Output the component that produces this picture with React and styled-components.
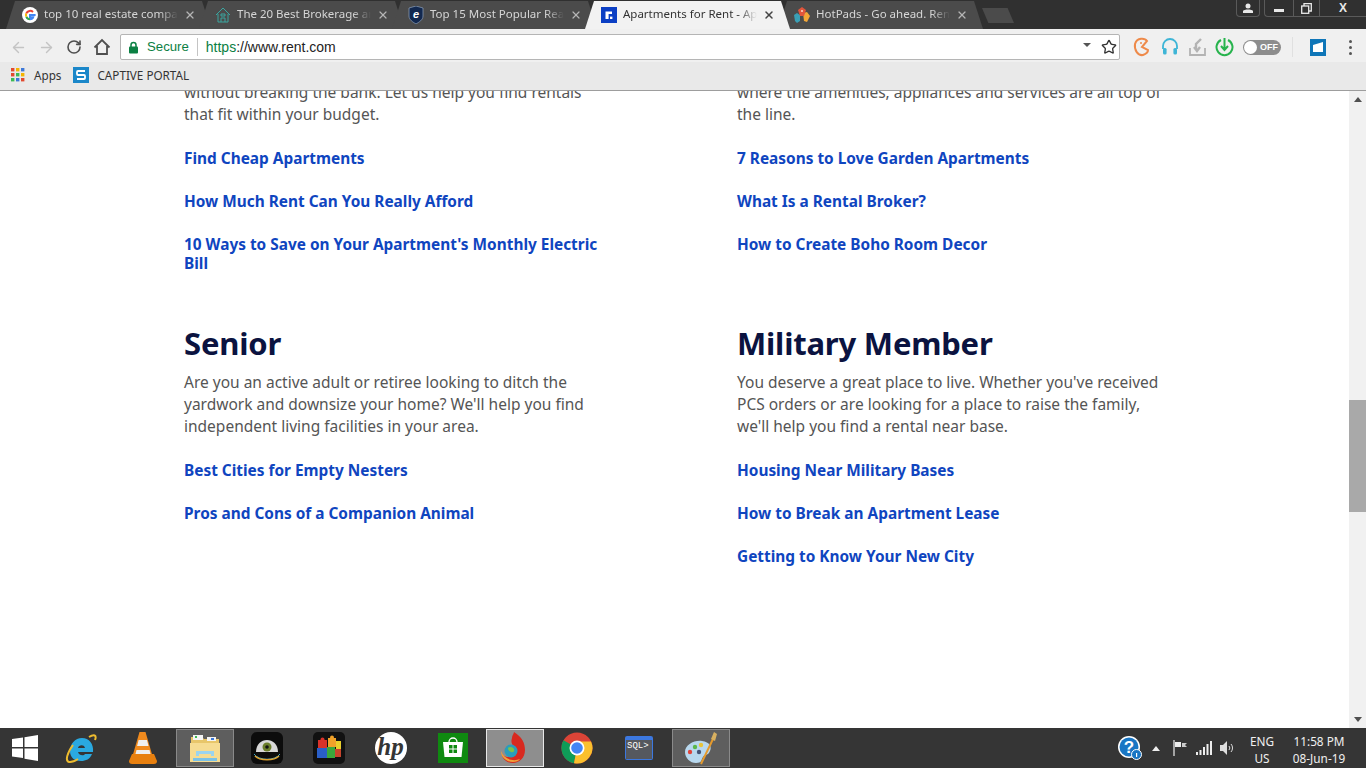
import React from 'react';
import styled, { createGlobalStyle } from 'styled-components';
import { ArrowLeft, ArrowRight, RotateCw, Star, X } from 'lucide-react';

const Global = createGlobalStyle`
  html, body { margin: 0; padding: 0; height: 100%; overflow: hidden; background: #fff; }
  #root { height: 100%; }
`;

const Screen = styled.div`
  width: 1366px;
  height: 768px;
  display: flex;
  flex-direction: column;
  overflow: hidden;
  font-family: "Noto Sans", sans-serif;
`;

/* browser chrome */
const TabStrip = styled.div`
  height: 29px;
  flex: none;
  display: flex;
  align-items: flex-end;
  background: #303030;
  padding-left: 6px;
`;

const Tab = styled.div`
  position: relative;
  z-index: ${p => (p.$active ? 2 : 1)};
  width: 205px;
  height: 28px;
  margin-right: -12px;
  flex: none;
  display: flex;
  align-items: center;
  padding: 0 15px 0 16px;
  box-sizing: border-box;
  gap: 6px;
  background: ${p => (p.$active ? '#f2f2f2' : '#4b4b4b')};
  color: ${p => (p.$active ? '#333' : '#d6d6d6')};
  clip-path: polygon(0 100%, 9px 0, calc(100% - 9px) 0, 100% 100%);
`;

const TabTitle = styled.span`
  flex: 1;
  min-width: 0;
  margin-bottom: 2px;
  white-space: nowrap;
  font: 11.5px/16px "Noto Sans", sans-serif;
  -webkit-mask-image: linear-gradient(to right, #000 86%, transparent 100%);
  mask-image: linear-gradient(to right, #000 86%, transparent 100%);
`;

const NewTab = styled.div`
  width: 32px;
  height: 15px;
  margin: 0 0 6px 11px;
  background: #4b4b4b;
  clip-path: polygon(0 0, 80% 0, 100% 100%, 20% 100%);
`;

const WindowControls = styled.div`
  margin-left: auto;
  align-self: flex-start;
  display: flex;
  gap: 4px;
  color: #e8e8e8;
`;

const WinBtn = styled.div`
  width: ${p => p.$w}px;
  height: 17px;
  display: flex;
  align-items: center;
  justify-content: center;
  box-sizing: border-box;
  border: 1px solid #5a5a5a;
  border-top: 0;
  border-radius: 0 0 4px 4px;
`;

const WinGroup = styled.div`
  display: flex;
  border: 1px solid #5a5a5a;
  border-top: 0;
  border-right: 0;
  border-radius: 0 0 0 4px;
  height: 17px;
  box-sizing: border-box;
`;

const WinCell = styled.div`
  width: ${p => p.$w}px;
  display: flex;
  align-items: center;
  justify-content: center;
  border-right: 1px solid #5a5a5a;
  font: bold 12px "Liberation Sans", sans-serif;
  &:last-child { border-right: 0; }
`;

const MinGlyph = styled.i`
  display: block;
  width: 10px;
  height: 3px;
  margin-top: 5px;
  background: #e8e8e8;
`;

const Toolbar = styled.div`
  height: 33px;
  flex: none;
  box-sizing: border-box;
  padding: 3px 0 0 4px;
  display: flex;
  align-items: center;
  background: #f0f0f0;
`;

const NavBtn = styled.div`
  width: 28px;
  height: 28px;
  display: flex;
  align-items: center;
  justify-content: center;
  color: ${p => (p.$off ? '#c4c4c4' : '#4f4f4f')};
`;

const Omnibox = styled.div`
  width: 1000px;
  height: 26px;
  margin-left: 4px;
  box-sizing: border-box;
  border: 1px solid #b5b5b5;
  border-radius: 2px;
  background: #fff;
  display: flex;
  align-items: center;
  padding: 0 2px 0 7px;
  font: 14px "Liberation Sans", sans-serif;
`;

const Secure = styled.span`
  color: #0b8043;
  margin-left: 8px;
  font-size: 13.2px;
  padding-right: 8px;
  border-right: 1px solid #c4c4c4;
  line-height: 18px;
`;

const Url = styled.span`
  margin-left: 8px;
  color: #222;
  font-size: 14px;
  b { color: #0b8043; font-weight: 400; }
`;

const OmniEnd = styled.div`
  margin-left: auto;
  display: flex;
  align-items: center;
  gap: 10px;
  color: #333;
`;

const DropCaret = styled.i`
  display: block;
  margin-bottom: 4px;
  border-left: 4px solid transparent;
  border-right: 4px solid transparent;
  border-top: 4px solid #555;
`;

const Extensions = styled.div`
  display: flex;
  align-items: center;
  margin-left: 8px;
  flex: 1;
`;

const ExtSlot = styled.div`
  width: ${p => p.$w || 28}px;
  display: flex;
  justify-content: center;
  align-items: center;
`;

const ToggleOff = styled.div`
  width: 38px;
  height: 15px;
  margin-left: 7px;
  flex: none;
  border-radius: 8px;
  background: #8d8d8d;
  display: flex;
  align-items: center;
  justify-content: flex-end;
  padding-right: 3px;
  box-sizing: border-box;
  position: relative;
  color: #fff;
  font: bold 9px "Liberation Sans", sans-serif;
  &::before {
    content: '';
    position: absolute;
    left: 1px;
    top: 1px;
    width: 13px;
    height: 13px;
    border-radius: 50%;
    background: #fff;
  }
`;

const ExtDivider = styled.div`
  width: 1px;
  height: 20px;
  background: #e0e0e0;
  margin: 0 17px 0 11px;
`;

const Dots = styled.div`
  display: flex;
  flex-direction: column;
  gap: 3px;
  margin-left: 23px;
  i {
    width: 3px;
    height: 3px;
    border-radius: 50%;
    background: #555;
    display: block;
  }
`;

const BookmarkBar = styled.div`
  height: 29px;
  flex: none;
  display: flex;
  align-items: center;
  background: #e9e9e9;
  border-bottom: 1px solid #9d9d9d;
  box-sizing: border-box;
  padding: 0 0 2px 11px;
  font: 11.7px "Noto Sans", sans-serif;
  color: #333;
`;

const BookmarkLabel = styled.span`
  margin-left: ${p => p.$gap}px;
  display: flex;
`;

/* web page */
const Viewport = styled.div`
  flex: 1;
  min-height: 0;
  display: flex;
  overflow: hidden;
  background: #fff;
`;

const Page = styled.div`
  flex: 1;
  min-width: 0;
  padding-left: 184px;
  overflow: hidden;
`;

const Sections = styled.div`
  display: grid;
  grid-template-columns: 553px 553px;
  margin-top: -10px;
  row-gap: 47px;
`;

const Section = styled.section`
  width: 425px;
`;

const Heading = styled.h2`
  margin: 0 0 5px;
  font: 700 31px/46px "Noto Sans", sans-serif;
  letter-spacing: -0.2px;
  color: #0b1340;
`;

const Blurb = styled.p`
  margin: 0 0 24px;
  font: 400 15.5px/22px "Noto Sans", sans-serif;
  color: #555;
  white-space: pre-line;
`;

const LinkList = styled.div`
  display: flex;
  flex-direction: column;
  gap: 24px;
`;

const PageLink = styled.a`
  font: 700 15.4px/19px "Noto Sans", sans-serif;
  color: #0f45bf;
  text-decoration: none;
`;

const Scrollbar = styled.div`
  width: 17px;
  flex: none;
  display: flex;
  flex-direction: column;
  background: #f1f1f1;
`;

const ScrollArrow = styled.div`
  height: 17px;
  flex: none;
  display: flex;
  align-items: center;
  justify-content: center;
  &::before {
    content: '';
    border-left: 4px solid transparent;
    border-right: 4px solid transparent;
    ${p => (p.$down ? 'border-top: 5px solid #505050;' : 'border-bottom: 5px solid #505050;')}
  }
`;

const ScrollTrack = styled.div`
  flex: 1;
  padding-top: 292px;
`;

const ScrollThumb = styled.div`
  height: 112px;
  background: #a9a9a9;
`;

/* windows taskbar */
const Taskbar = styled.div`
  height: 40px;
  flex: none;
  display: flex;
  align-items: center;
  background: #353535;
  color: #f0f0f0;
`;

const StartBtn = styled.div`
  width: 50px;
  height: 40px;
  margin-right: 2px;
  display: flex;
  align-items: center;
  justify-content: center;
`;

const TaskGroup = styled.div`
  display: flex;
  gap: 4px;
`;

const TaskBtn = styled.div`
  width: 58px;
  height: 38px;
  box-sizing: border-box;
  display: flex;
  align-items: center;
  justify-content: center;
  background: ${p => (p.$focus ? '#8e8e8e' : p.$open ? '#5e5e5e' : 'transparent')};
  border: 1px solid ${p => (p.$focus ? '#e8e8e8' : p.$open ? '#8a8a8a' : 'transparent')};
`;

const Tray = styled.div`
  margin-left: auto;
  display: flex;
  align-items: center;
  height: 40px;
  padding-right: 6px;
`;

const TrayIcon = styled.div`
  width: ${p => p.$w}px;
  display: flex;
  justify-content: center;
`;

const TrayText = styled.div`
  width: ${p => p.$w}px;
  margin-left: ${p => p.$gap || 0}px;
  padding-top: 3px;
  text-align: center;
  font: 11.8px/17px "Noto Sans", sans-serif;
  color: #f0f0f0;
`;

const Sec = ({ title, text, links }) => (
  <Section>
    {title && <Heading>{title}</Heading>}
    <Blurb>{text}</Blurb>
    <LinkList>
      {links.map(l => <PageLink href="#" key={l}>{l}</PageLink>)}
    </LinkList>
  </Section>
);

const GoogleIcon = () => (
  <svg width="16" height="16" viewBox="0 0 16 16">
    <circle cx="8" cy="8" r="8" fill="#fff" />
    <path d="M13.6 8.1H8v2.2h3.2c-.4 1.2-1.6 2-3.2 2" fill="none" stroke="#4285f4" strokeWidth="2" />
    <path d="M4.3 9.6A4.2 4.2 0 0 0 8 12.3" fill="none" stroke="#34a853" strokeWidth="2" />
    <path d="M4.3 6.4a4.2 4.2 0 0 0 0 3.2" fill="none" stroke="#fbbc05" strokeWidth="2" />
    <path d="M11 5A4.2 4.2 0 0 0 4.3 6.4" fill="none" stroke="#ea4335" strokeWidth="2" />
  </svg>
);

const HouseIcon = () => (
  <svg width="16" height="16" viewBox="0 0 16 16" fill="none" stroke="#3aa6a0" strokeWidth="1">
    <path d="M1 8l7-7 7 7M3 7v8h10V7" />
    <path d="M6 15v-4h4v4M6 7h4v2H6z" />
  </svg>
);

const ShieldIcon = () => (
  <svg width="16" height="18" viewBox="0 0 16 18">
    <path d="M1 2l7-2 7 2v8c0 4-4 6-7 8-3-2-7-4-7-8z" fill="#12284f" stroke="#8fa3bf" strokeWidth=".7" />
    <text x="8" y="12" textAnchor="middle" fill="#fff" fontSize="11" fontStyle="italic" fontWeight="700" fontFamily="Liberation Sans">e</text>
  </svg>
);

const RentIcon = () => (
  <svg width="16" height="16" viewBox="0 0 16 16">
    <rect width="16" height="16" fill="#0b3fc4" />
    <path d="M4.5 12V4.5h6.5v2.6H7.6V12z" fill="#fff" />
    <rect x="9" y="9.6" width="2.4" height="2.4" fill="#fff" />
  </svg>
);

const HotpadsIcon = () => (
  <svg width="16" height="16" viewBox="0 0 16 16">
    <path d="M0 8l3-2 3 2v6l-3 2-2-2z" fill="#3a9fb5" />
    <path d="M9 6l4-1 3 4-3 6-3-1z" fill="#f3a738" />
    <path d="M4 3l4-3 4 3-2 6H6z" fill="#e0553c" />
    <circle cx="8" cy="4" r="1" fill="#fbd9c9" />
  </svg>
);

const TabClose = ({ dark }) => (
  <X size={12} strokeWidth={dark ? 3 : 2.4} color={dark ? '#444' : '#b5b5b5'} style={{ flex: 'none' }} />
);

const HomeIcon = () => (
  <svg width="18" height="18" viewBox="0 0 18 18" fill="none" stroke="#4f4f4f" strokeWidth="1.8">
    <path d="M1.5 9.5L9 2l7.5 7.5M4 8v8h10V8" />
  </svg>
);

const LockIcon = () => (
  <svg width="11" height="13" viewBox="0 0 11 13">
    <path d="M3 6V4a2.5 2.5 0 0 1 5 0v2" fill="none" stroke="#0b8043" strokeWidth="1.5" />
    <rect x="1" y="5.5" width="9" height="7" rx="1" fill="#0b8043" />
  </svg>
);

const PacIcon = () => (
  <svg width="18" height="20" viewBox="0 0 18 20" fill="none" stroke="#ee8a4a" strokeWidth="2">
    <path d="M14 4C12 1 4 0 2 7c-1 6 3 12 8 11 3-1 5-3 5-5l-6-3z" />
    <circle cx="8" cy="6" r="1" fill="#ee8a4a" stroke="none" />
  </svg>
);

const PhonesIcon = () => (
  <svg width="18" height="18" viewBox="0 0 18 18" fill="none">
    <path d="M2 11V8a7 7 0 0 1 14 0v3" stroke="#3eb5d6" strokeWidth="1.8" />
    <rect x="2" y="10" width="3.6" height="6.5" rx="1.5" fill="#3eb5d6" />
    <rect x="12.4" y="10" width="3.6" height="6.5" rx="1.5" fill="#3eb5d6" />
  </svg>
);

const SaveIcon = () => (
  <svg width="18" height="20" viewBox="0 0 18 20" fill="none" stroke="#b3b3b3" strokeWidth="1.8">
    <path d="M1 11v7h15v-7" />
    <path d="M12 2L7 7v6M5 10l3 4 3-4" strokeWidth="2.4" />
  </svg>
);

const GreenIcon = () => (
  <svg width="19" height="20" viewBox="0 0 19 20" fill="none" stroke="#27b34d" strokeWidth="2">
    <path d="M6 3a8 8 0 1 0 7 0" />
    <path d="M9.5 1v11M6 9l3.5 4L13 9" />
  </svg>
);

const BlueExtIcon = () => (
  <svg width="16" height="17" viewBox="0 0 16 17">
    <rect width="16" height="17" fill="#0f76b8" />
    <path d="M3 6l10-3v10H3z" fill="#fff" />
  </svg>
);

const AppsGrid = () => {
  const colors = ['#e2492f', '#f4b400', '#3c78d8', '#e2492f', '#3cba54', '#f4b400', '#3cba54', '#3c78d8', '#e2492f'];
  return (
    <svg width="14" height="14" viewBox="0 0 14 14">
      {colors.map((c, i) => (
        <rect key={i} x={(i % 3) * 5} y={Math.floor(i / 3) * 5} width="3.4" height="3.4" fill={c} />
      ))}
    </svg>
  );
};

const PortalIcon = () => (
  <svg width="16" height="16" viewBox="0 0 16 16">
    <rect width="16" height="16" fill="#1b87c9" />
    <path d="M12 4H5a1 1 0 0 0-1 1v2a1 1 0 0 0 1 1h6a1 1 0 0 1 1 1v2a1 1 0 0 1-1 1H4" fill="none" stroke="#fff" strokeWidth="1.8" />
  </svg>
);

const WinLogo = () => (
  <svg width="26" height="26" viewBox="0 0 26 26" fill="#fff">
    <path d="M0 4l11-1.5V12H0zM12.500 2.300L26 0v12H12.500zM0 13.500h11V23L0 21.500zM12.500 13.500H26V26l-13.500-2.200z" />
  </svg>
);

const IEIcon = () => (
  <svg width="32" height="32" viewBox="0 0 32 32" fill="none">
    <path d="M17 6C10 6 5 12 5 19s5 10 11 10c5 0 9-2 11-7h-7c-1 2-6 2-7-2h15c1-8-4-14-11-14zm-4 10c.5-3 6-4 7 0z" fill="#2aa9e0" fillRule="evenodd" />
    <path d="M24 5c5-3 8-2 6 3M8 13C2 21 0 29 4 30c3 .5 6-1 9-3" stroke="#eebc2f" strokeWidth="2" />
  </svg>
);

const VlcIcon = () => (
  <svg width="28" height="32" viewBox="0 0 28 32">
    <path d="M10.500 0h6l7 24h-20z" fill="#f08a1d" />
    <path d="M9.600 8h8.400l1.500 6h-11.400zM7.500 18h13l1 4h-15z" fill="#efefef" />
    <path d="M3 22h22l3 7c0 2-1 3-3 3H3c-2 0-3-1-3-3z" fill="#e8800f" />
  </svg>
);

const FolderIcon = () => (
  <svg width="32" height="32" viewBox="0 0 32 32">
    <path d="M2 5h11l2 2h15v6H2z" fill="#e8c66a" />
    <rect x="4" y="3" width="10" height="5" fill="#f4f4f4" />
    <rect x="6" y="4" width="2" height="2" fill="#3cba54" />
    <rect x="18" y="5" width="9" height="4" fill="#f4f4f4" />
    <rect x="22" y="6" width="3" height="2" fill="#3c78d8" />
    <path d="M1 11h30v19H1z" fill="#f6dc92" />
    <path d="M7 24v-5h18v5h-3v-2H10v2z" fill="#9bd4ef" />
    <rect x="4" y="26" width="24" height="3" fill="#7cc2e6" />
  </svg>
);

const CamIcon = () => (
  <svg width="32" height="32" viewBox="0 0 32 32">
    <rect width="32" height="32" rx="6" fill="#0c0c0c" />
    <path d="M5 20c0-16 22-16 22 0z" fill="#d8d8d8" />
    <circle cx="16" cy="15" r="4.500" fill="#6a7d2a" />
    <circle cx="16" cy="15" r="1.800" fill="#111" />
    <path d="M3 22c5 7 21 7 26 0" fill="none" stroke="#3aa7c8" strokeWidth="1" />
    <path d="M4 24c5 5 19 5 24 0" fill="none" stroke="#e0a32e" strokeWidth="1.500" />
  </svg>
);

const PuzzleIcon = () => (
  <svg width="32" height="32" viewBox="0 0 32 32">
    <rect width="32" height="32" rx="5" fill="#111" />
    <rect x="5" y="8" width="9" height="8" fill="#d8322a" />
    <circle cx="9.500" cy="7.500" r="2" fill="#d8322a" />
    <rect x="15" y="6" width="8" height="9" fill="#f0a22a" />
    <circle cx="19" cy="5.500" r="2" fill="#f0a22a" />
    <rect x="23" y="9" width="5" height="8" fill="#e9d02c" />
    <rect x="4" y="16" width="10" height="10" fill="#2a5fc8" />
    <rect x="14" y="15" width="8" height="11" fill="#3aa83c" />
    <rect x="22" y="17" width="6" height="8" fill="#c8442c" />
  </svg>
);

const HpIcon = () => (
  <svg width="32" height="32" viewBox="0 0 32 32">
    <circle cx="16" cy="16" r="16" fill="#fff" />
    <text x="15.500" y="23" textAnchor="middle" fontFamily="Liberation Serif" fontStyle="italic" fontWeight="700" fontSize="25" fill="#353535">hp</text>
  </svg>
);

const StoreIcon = () => (
  <svg width="30" height="30" viewBox="0 0 30 30">
    <rect width="30" height="30" fill="#0f8a10" />
    <path d="M11 9a4 4 0 0 1 8 0" fill="none" stroke="#fff" strokeWidth="1.300" />
    <path d="M5 9h20l-1.500 15h-17z" fill="#fff" />
    <path d="M11 12h3.500v3.500H11zM15.500 12H19v3.500h-3.500zM11 16.500h3.500V20H11zM15.500 16.500H19V20h-3.500z" fill="#0f8a10" />
  </svg>
);

const FlameIcon = () => (
  <svg width="30" height="32" viewBox="0 0 30 32">
    <path d="M14 0c8 5 11 11 11 18 0 8-6 13-12 13S2 27 2 22c3 5 12 4 12-4 0-5-4-6-2-12 0-3 2-4 2-6z" fill="#d8291f" />
    <path d="M1 19c0 7 6 11 12 11 3 0 6-1 7-3-7 3-16 0-19-8z" fill="#f1a23a" />
    <circle cx="11" cy="19" r="6.500" fill="#2a9dbb" />
    <path d="M8 16c2-2 5-1 6 1s-1 4-3 3-3-2-3-4z" fill="#7cc04a" />
  </svg>
);

const ChromeIcon = () => (
  <svg width="32" height="32" viewBox="0 0 32 32">
    <circle cx="16" cy="16" r="15.500" fill="#db4437" />
    <path d="M16 16L2.500 8.200A15.500 15.500 0 0 0 13 31.200z" fill="#0f9d58" />
    <path d="M16 16l-3 15.200A15.500 15.500 0 0 0 30 9.500H16z" fill="#fbc02d" />
    <circle cx="16" cy="16" r="7.500" fill="#fff" />
    <circle cx="16" cy="16" r="5.800" fill="#4285f4" />
  </svg>
);

const SqlIcon = () => (
  <svg width="28" height="24" viewBox="0 0 28 24">
    <rect x=".5" y=".5" width="27" height="23" rx="1" fill="#55585e" stroke="#3c78e0" />
    <rect x="1" y="1" width="26" height="3" fill="#3c78e0" />
    <text x="2" y="11.500" fontFamily="Liberation Mono" fontSize="9" fill="#fff">SQL&gt;</text>
  </svg>
);

const PaletteIcon = () => (
  <svg width="34" height="34" viewBox="0 0 34 34">
    <path d="M1 21c0-7 9-12 17-11 8 1 10 6 8 10-2 5-5 3-7 6s-1 6-7 6C6 32 1 27 1 21z" fill="#b8d8ee" />
    <circle cx="6" cy="21" r="2.200" fill="#e0433a" />
    <circle cx="11" cy="16" r="2.200" fill="#5ab84a" />
    <circle cx="17" cy="14" r="2.200" fill="#e8c43a" />
    <circle cx="15" cy="21" r="2.200" fill="#445577" />
    <path d="M17 33L29 8" stroke="#e59a2c" strokeWidth="2" />
    <path d="M27 8l3-7 3 2-2 7z" fill="#d8b060" />
  </svg>
);

const HelpIcon = () => (
  <svg width="26" height="26" viewBox="0 0 26 26">
    <circle cx="12" cy="12" r="11" fill="#fff" />
    <circle cx="12" cy="12" r="9.500" fill="#1976c4" />
    <text x="12" y="18" textAnchor="middle" fontFamily="Liberation Sans" fontWeight="700" fontSize="17" fill="#fff">?</text>
    <circle cx="19.500" cy="19.500" r="5" fill="#1976c4" stroke="#fff" />
    <rect x="19" y="18" width="1.200" height="4" fill="#fff" />
  </svg>
);

const Caret = () => (
  <svg width="8" height="5" viewBox="0 0 8 5"><path d="M0 5l4-5 4 5z" fill="#eee" /></svg>
);

const FlagIcon = () => (
  <svg width="14" height="16" viewBox="0 0 14 16">
    <path d="M1 0v16" stroke="#eee" strokeWidth="1.200" />
    <path d="M2 2h6v5H2z" fill="#eee" />
    <path d="M9 3h5l-2 2 2 2H9z" fill="#ccc" />
  </svg>
);

const SignalIcon = () => (
  <svg width="16" height="14" viewBox="0 0 16 14" fill="#eee">
    <rect x="0" y="11" width="2" height="3" />
    <rect x="3.500" y="9" width="2" height="5" />
    <rect x="7" y="6" width="2" height="8" />
    <rect x="10.500" y="3" width="2" height="11" />
    <rect x="14" y="0" width="2" height="14" />
  </svg>
);

const SpeakerIcon = () => (
  <svg width="16" height="14" viewBox="0 0 16 14" fill="none" stroke="#ddd">
    <path d="M0 4h3l4-4v14l-4-4H0z" fill="#ddd" stroke="none" />
    <path d="M9 5a3 3 0 0 1 0 4M11 3a6 6 0 0 1 0 8" />
  </svg>
);

const RestoreIcon = () => (
  <svg width="11" height="11" viewBox="0 0 11 11" fill="none" stroke="#e8e8e8" strokeWidth="1.300">
    <path d="M3 3V.7h7.300V8H8" />
    <rect x=".7" y="3" width="7" height="7.300" />
  </svg>
);

const AccountIcon = () => (
  <svg width="10" height="10" viewBox="0 0 10 10" fill="#e8e8e8">
    <circle cx="5" cy="3" r="2.500" />
    <path d="M0 10V8c1-2 9-2 10 0v2z" />
  </svg>
);

export default function App() {
  return (
    <Screen>
      <Global />
      <TabStrip>
        <Tab><GoogleIcon /><TabTitle>top 10 real estate compa</TabTitle><TabClose /></Tab>
        <Tab><HouseIcon /><TabTitle>The 20 Best Brokerage ar</TabTitle><TabClose /></Tab>
        <Tab><ShieldIcon /><TabTitle>Top 15 Most Popular Rea</TabTitle><TabClose /></Tab>
        <Tab $active><RentIcon /><TabTitle>Apartments for Rent - Ap</TabTitle><TabClose dark /></Tab>
        <Tab><HotpadsIcon /><TabTitle>HotPads - Go ahead. Ren</TabTitle><TabClose /></Tab>
        <NewTab />
        <WindowControls>
          <WinBtn $w={24}><AccountIcon /></WinBtn>
          <WinGroup>
            <WinCell $w={28}><MinGlyph /></WinCell>
            <WinCell $w={25}><RestoreIcon /></WinCell>
            <WinCell $w={46}>X</WinCell>
          </WinGroup>
        </WindowControls>
      </TabStrip>

      <Toolbar>
        <NavBtn $off><ArrowLeft size={17} strokeWidth={2} /></NavBtn>
        <NavBtn $off><ArrowRight size={17} strokeWidth={2} /></NavBtn>
        <NavBtn><RotateCw size={16} strokeWidth={2.4} /></NavBtn>
        <NavBtn><HomeIcon /></NavBtn>
        <Omnibox>
          <LockIcon />
          <Secure>Secure</Secure>
          <Url><b>https</b>://www.rent.com</Url>
          <OmniEnd>
            <DropCaret />
            <Star size={16} strokeWidth={2} />
          </OmniEnd>
        </Omnibox>
        <Extensions>
          <ExtSlot><PacIcon /></ExtSlot>
          <ExtSlot><PhonesIcon /></ExtSlot>
          <ExtSlot><SaveIcon /></ExtSlot>
          <ExtSlot $w={24}><GreenIcon /></ExtSlot>
          <ToggleOff>OFF</ToggleOff>
          <ExtDivider />
          <ExtSlot $w={16}><BlueExtIcon /></ExtSlot>
          <Dots><i /><i /><i /></Dots>
        </Extensions>
      </Toolbar>

      <BookmarkBar>
        <AppsGrid />
        <BookmarkLabel $gap={9}>Apps</BookmarkLabel>
        <BookmarkLabel $gap={12}><PortalIcon /></BookmarkLabel>
        <BookmarkLabel $gap={8}>CAPTIVE PORTAL</BookmarkLabel>
      </BookmarkBar>

      <Viewport>
        <Page>
          <Sections>
            <Sec
              text={'without breaking the bank. Let us help you find rentals\nthat fit within your budget.'}
              links={['Find Cheap Apartments', 'How Much Rent Can You Really Afford', "10 Ways to Save on Your Apartment's Monthly Electric Bill"]}
            />
            <Sec
              text={'where the amenities, appliances and services are all top of\nthe line.'}
              links={['7 Reasons to Love Garden Apartments', 'What Is a Rental Broker?', 'How to Create Boho Room Decor']}
            />
            <Sec
              title="Senior"
              text={"Are you an active adult or retiree looking to ditch the\nyardwork and downsize your home? We'll help you find\nindependent living facilities in your area."}
              links={['Best Cities for Empty Nesters', 'Pros and Cons of a Companion Animal']}
            />
            <Sec
              title="Military Member"
              text={"You deserve a great place to live. Whether you've received\nPCS orders or are looking for a place to raise the family,\nwe'll help you find a rental near base."}
              links={['Housing Near Military Bases', 'How to Break an Apartment Lease', 'Getting to Know Your New City']}
            />
          </Sections>
        </Page>
        <Scrollbar>
          <ScrollArrow />
          <ScrollTrack><ScrollThumb /></ScrollTrack>
          <ScrollArrow $down />
        </Scrollbar>
      </Viewport>

      <Taskbar>
        <StartBtn><WinLogo /></StartBtn>
        <TaskGroup>
          <TaskBtn><IEIcon /></TaskBtn>
          <TaskBtn><VlcIcon /></TaskBtn>
          <TaskBtn $open><FolderIcon /></TaskBtn>
          <TaskBtn><CamIcon /></TaskBtn>
          <TaskBtn><PuzzleIcon /></TaskBtn>
          <TaskBtn><HpIcon /></TaskBtn>
          <TaskBtn><StoreIcon /></TaskBtn>
          <TaskBtn $focus><FlameIcon /></TaskBtn>
          <TaskBtn><ChromeIcon /></TaskBtn>
          <TaskBtn><SqlIcon /></TaskBtn>
          <TaskBtn $open><PaletteIcon /></TaskBtn>
        </TaskGroup>
        <Tray>
          <TrayIcon $w={28}><HelpIcon /></TrayIcon>
          <TrayIcon $w={24}><Caret /></TrayIcon>
          <TrayIcon $w={24}><FlagIcon /></TrayIcon>
          <TrayIcon $w={24}><SignalIcon /></TrayIcon>
          <TrayIcon $w={24}><SpeakerIcon /></TrayIcon>
          <TrayText $w={32} $gap={6}>ENG<br />US</TrayText>
          <TrayText $w={82}>11:58 PM<br />08-Jun-19</TrayText>
        </Tray>
      </Taskbar>
    </Screen>
  );
}
